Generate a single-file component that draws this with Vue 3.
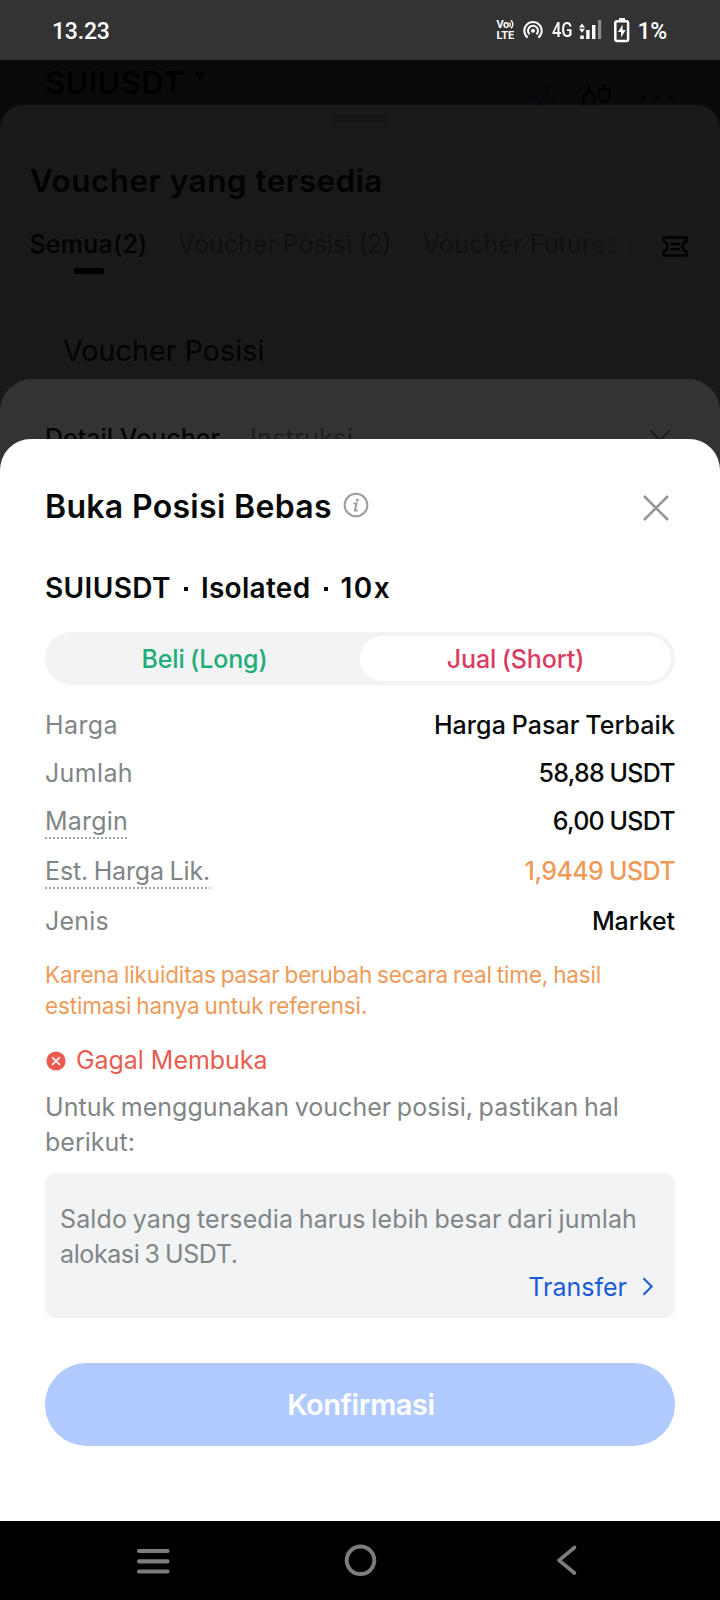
<script setup>
const rows = [
  { label: 'Harga', value: 'Harga Pasar Terbaik', lcls: 'harga', vcls: 'words' },
  { label: 'Jumlah', value: '58,88 USDT', lcls: 'wide', vcls: 'num' },
  { label: 'Margin', value: '6,00 USDT', lcls: 'margin dotted', vcls: 'num' },
  { label: 'Est. Harga Lik.', value: '1,9449 USDT', lcls: 'est dotted', vcls: 'num orange' },
  { label: 'Jenis', value: 'Market', lcls: 'jenis', vcls: 'market' },
]
</script>

<template>
  <div class="screen">
    <header class="status">
      <span class="clock">13.23</span>
      <div class="sys">
        <div class="volte">
          <span class="vo">Vo<svg width="6" height="9" viewBox="0 0 6 9"><path d="M.5 2.500q1.800 1.800 0 4.300M2 .3q3.800 3.700 0 8" fill="none" stroke="#fff" stroke-width="1.300" /></svg></span>
          <span class="lte">LTE</span>
        </div>
        <svg class="hotspot" width="20" height="20" viewBox="0 0 20 20" fill="none" stroke="#fff" stroke-width="2">
          <path d="M4.600 17.600A8.700 8.700 0 1 1 15.400 17.600" />
          <path d="M6.500 14.300A5 5 0 1 1 13.500 14.300" />
          <circle cx="10" cy="10.800" r="2" fill="#fff" stroke="none" />
        </svg>
        <span class="net">4G</span>
        <svg class="signal" width="23" height="20" viewBox="0 0 23 20" fill="#fff">
          <path d="M3 3.500l3 3.900H0zM3 12.700L0 8.800h6z" />
          <rect x="1.200" y="15.500" width="3.600" height="3.500" />
          <rect x="7.200" y="10" width="3.400" height="9" />
          <rect x="13" y="5" width="3.400" height="14" />
          <rect x="19" y="0" width="3.200" height="19" fill="#8c8c8c" />
        </svg>
        <svg class="batt" width="16" height="25" viewBox="0 0 16 25">
          <path d="M5 0h6v3H5z" fill="#fff" />
          <rect x="1.300" y="3.200" width="12.800" height="19.800" rx="1.800" fill="none" stroke="#fff" stroke-width="2.500" />
          <path d="M8.600 6.500L4 14h3.100v5.500L11.600 12H8.600z" fill="#fff" />
        </svg>
        <span class="pct">1%</span>
      </div>
    </header>

    <main class="stack">
      <section class="trade">
        <span class="pair-bg">SUIUSDT</span>
        <svg class="caret" width="11" height="8" viewBox="0 0 11 8"><path d="M.5.5h10v2L5.500 7.500.5 2.500z" fill="#000" /></svg>
        <svg class="tools" width="160" height="22" viewBox="0 0 160 22" fill="none" stroke="#010101" stroke-width="2.400">
          <g stroke="#05090f" stroke-width="2"><path d="M8 14h6l6 7M20 2h9l-5 7 10 11M20 10l6 10" /></g>
          <path d="M68 1v6M62.500 22v-8q0-3 3-4l2.500-3 2.500 3q3 1 3 4v8M83 1v5M78 6.500h10.500v9l-3 3h-4.500l-3-3z" />
          <g fill="#000" stroke="none"><rect x="120" y="13" width="4" height="4" /><rect x="134" y="13" width="4" height="4" /><rect x="148" y="13" width="4" height="4" /></g>
        </svg>
      </section>

      <section class="vouchers">
        <div class="handle"></div>
        <h2>Voucher yang tersedia</h2>
        <div class="tabs">
          <span class="tab on">Semua(2)</span>
          <span class="tab pos">Voucher Posisi (2)</span>
          <span class="tab fut">Voucher Futures (</span>
          <svg class="ticket" width="26" height="21" viewBox="0 0 26 21" fill="none" stroke="#000" stroke-width="2.300">
            <path d="M1.500 1.500h23v4q-4 1.500-4 5t4 5v4h-23v-4q4-1.500 4-5t-4-5z" /><path d="M8.500 7.900h9.500M8.500 13.100h9.500" />
          </svg>
        </div>
        <p class="card-title">Voucher Posisi</p>
      </section>

      <section class="detail">
        <span class="d1">Detail Voucher</span>
        <span class="d2">Instruksi</span>
        <svg class="dx" width="22" height="22" viewBox="0 0 22 22"><path d="M1 1l20 20M21 1L1 21" stroke="#1c1c1c" stroke-width="1.800" /></svg>
      </section>

      <section class="sheet">
        <div class="head">
          <h1>Buka Posisi Bebas</h1>
          <svg class="info" width="26" height="26" viewBox="0 0 26 26">
            <circle cx="13" cy="13" r="11.300" fill="none" stroke="#9b9e9e" stroke-width="2.100" />
            <circle cx="14.300" cy="7.900" r="1.500" fill="#9b9e9e" />
            <path d="M10.400 11.600h3.200l-1.700 6.900h2.600" fill="none" stroke="#9b9e9e" stroke-width="2" />
          </svg>
          <svg class="close" width="26" height="26" viewBox="0 0 26 26"><path d="M1 1l24 24M25 1L1 25" stroke="#959898" stroke-width="2.600" /></svg>
        </div>
        <div class="pair"><span>SUIUSDT</span><i></i><span class="iso">Isolated</span><i></i><span class="lev">10x</span></div>
        <div class="seg">
          <button class="buy">Beli (Long)</button>
          <button class="sell">Jual (Short)</button>
        </div>
        <div class="rows">
          <div v-for="r in rows" :key="r.label" class="row">
            <span class="label" :class="r.lcls">{{ r.label }}</span>
            <span class="value" :class="r.vcls">{{ r.value }}</span>
          </div>
        </div>
        <p class="note">Karena likuiditas pasar berubah secara real time, hasil<br>estimasi hanya untuk referensi.</p>
        <div class="fail">
          <svg width="20" height="20" viewBox="0 0 20 20"><circle cx="10" cy="10" r="9.600" fill="#ea5a4d" /><path d="M6.100 6.100l7.800 7.800M13.900 6.100l-7.800 7.800" stroke="#fff" stroke-width="1.600" /></svg>
          <span>Gagal Membuka</span>
        </div>
        <p class="req">Untuk menggunakan voucher posisi, pastikan hal<br>berikut:</p>
        <div class="box">
          <p>Saldo yang tersedia harus lebih besar dari jumlah<br><span class="l2">alokasi 3 USDT.</span></p>
          <div class="transfer">
            <span>Transfer</span>
            <svg width="12" height="19" viewBox="0 0 12 19"><path d="M1.500 1.200l8.200 8.300-8.200 8.300" fill="none" stroke="#1a5bd6" stroke-width="2" /></svg>
          </div>
        </div>
        <button class="confirm">Konfirmasi</button>
      </section>
    </main>

    <nav class="nav">
      <svg width="720" height="79" viewBox="0 0 720 79" fill="none" stroke="#7d7d7d">
        <path d="M139 30h28.500M139 40.300h28.500M139 50.500h28.500" stroke-width="4.200" stroke-linecap="round" />
        <circle cx="360.500" cy="39.300" r="13.800" stroke-width="4" />
        <path d="M574.500 26.500L559 39.300l15.500 12.700" stroke-width="3.600" stroke-linecap="round" stroke-linejoin="round" />
      </svg>
    </nav>
  </div>
</template>

<style>
body { margin: 0; }
</style>

<style scoped>
* { box-sizing: border-box; }
.screen { width: 720px; height: 1600px; display: flex; flex-direction: column; overflow: hidden; background: #000; font-family: Inter, "Liberation Sans", sans-serif; font-size: 25px; color: #080a0a; white-space: nowrap; }
h1, h2, p { margin: 0; }
button { border: 0; padding: 0; margin: 0; font: inherit; color: inherit; background: none; white-space: nowrap; }
svg { display: block; flex: none; }

.status { height: 60px; flex: none; background: #333; color: #fff; display: flex; justify-content: space-between; font-family: Roboto, sans-serif; font-weight: 500; padding: 0 53px 0 52px; }
.clock { font-size: 23px; line-height: 63px; letter-spacing: -.2px; }
.sys { display: flex; align-items: flex-start; }
.volte { width: 20px; padding-top: 19px; font-weight: 700; font-size: 11px; }
.vo { display: flex; line-height: 11px; height: 11px; letter-spacing: -.4px; }
.vo svg { margin: .5px 0 0 0; }
.lte { display: block; line-height: 11px; }
.hotspot { margin: 20px 0 0 6px; }
.net { font-size: 20px; line-height: 61px; width: 20px; margin-left: 9px; transform: scaleX(.82); transform-origin: left; }
.signal { margin: 20px 0 0 7px; }
.batt { margin: 18px 0 0 12px; }
.pct { font-size: 23px; line-height: 63px; margin-left: 8px; letter-spacing: -.3px; }

.stack { position: relative; height: 1461px; flex: none; background: #0a0a0a; }
.trade { height: 45px; display: flex; padding-left: 45px; color: #000; }
.pair-bg { font-size: 31px; font-weight: 600; line-height: 46px; letter-spacing: .35px; }
.caret { margin: 12px 0 0 11px; }
.tools { margin: 23px 0 0 315px; }

.vouchers { position: absolute; left: 0; right: 0; top: 45px; height: 320px; border-radius: 24px 24px 0 0; background: #191919; color: #010303; }
.handle { width: 58px; height: 8px; border-radius: 4px; margin: 10px auto 0; background: #161616; }
h2 { margin: 37.500px 0 0 30px; font-size: 31.500px; font-weight: 600; line-height: 40px; letter-spacing: .45px; }
.tabs { display: flex; height: 93.500px; padding: 25.500px 0 0 30px; line-height: 36px; color: #0f1010; }
.on { font-weight: 500; color: #010303; letter-spacing: .25px; display: flex; flex-direction: column; align-items: center; width: 117px; }
.on::after { content: ''; width: 30px; height: 5.500px; border-radius: 2px; background: #000; margin-top: 6px; }
.pos { margin-left: 31px; width: 214px; letter-spacing: 0; word-spacing: -1px; }
.fut { margin-left: 31px; width: 216px; overflow: hidden; letter-spacing: .1px; background: linear-gradient(90deg, #0f1010 70%, #191919 100%); -webkit-background-clip: text; background-clip: text; color: transparent; }
.ticket { margin: 10px 0 0 23px; }
.card-title { margin: 39px 0 0 63px; font-size: 28.500px; line-height: 36px; letter-spacing: .13px; }

.detail { position: absolute; left: 0; right: 0; top: 319px; height: 100px; border-radius: 32px 32px 0 0; background: #333; display: flex; padding: 42.500px 0 0 45px; line-height: 32px; }
.d1 { font-weight: 500; color: #040505; width: 205px; }
.d2 { color: #1c1e1e; width: 399px; letter-spacing: .35px; }
.dx { margin-top: 7px; }

.sheet { position: absolute; left: 0; right: 0; top: 379px; bottom: 0; border-radius: 31px 31px 0 0; background: #fff; padding: 48px 45px 0; }
.head { display: flex; height: 40px; }
h1 { font-size: 32px; line-height: 40px; font-weight: 600; letter-spacing: .32px; width: 298px; }
.info { margin-top: 5px; }
.close { margin: 8px 0 0 274px; }
.pair { display: flex; margin-top: 44px; height: 34px; font-size: 28px; line-height: 34px; font-weight: 600; letter-spacing: .38px; }
.pair i { width: 4px; height: 4px; background: #080a0a; margin: 16px 12.500px 0 13.500px; }
.iso { letter-spacing: .3px; }
.lev { letter-spacing: 1.400px; }
.seg { display: flex; margin-top: 27px; height: 53px; border-radius: 27px; background: #f1f3f4; padding: 4px; line-height: 46px; font-weight: 500; }
.seg button { width: 311px; height: 45px; border-radius: 23px; text-align: center; word-spacing: -1px; }
.buy { color: #20ad78; letter-spacing: -.15px; }
.sell { color: #db3a62; background: #fff; letter-spacing: -.12px; }
.rows { margin-top: 25px; height: 226px; }
.row { display: flex; justify-content: space-between; height: 48px; line-height: 30px; }
.row:nth-child(n+3) { height: 50px; }
.label { color: #818586; height: 30px; }
.harga { letter-spacing: .4px; }
.wide { letter-spacing: .35px; }
.margin { letter-spacing: .2px; }
.est { letter-spacing: -.15px; word-spacing: -1.200px; }
.jenis { letter-spacing: .2px; }
.dotted { height: 33px; background: repeating-linear-gradient(90deg, #a2a5a6 0 2px, transparent 2px 4px) bottom / 100% 2px no-repeat; }
.value { font-weight: 500; }
.words { letter-spacing: .07px; word-spacing: -1px; }
.num { letter-spacing: -.7px; word-spacing: -.5px; }
.market { letter-spacing: -.1px; }
.orange { color: #ef9a58; letter-spacing: -.55px; }
.note { margin-top: 24px; font-size: 22.500px; line-height: 30.500px; color: #ef9a58; letter-spacing: -.15px; word-spacing: -1.200px; }
.fail { display: flex; margin-top: 24px; line-height: 30px; color: #e85d51; }
.fail svg { margin: 5.500px 10px 0 1px; }
.fail span { letter-spacing: -.05px; }
.req { margin-top: 15px; line-height: 35px; color: #818586; letter-spacing: .03px; word-spacing: -1.500px; }
.box { margin-top: 13px; height: 145px; border-radius: 10px; background: #f1f3f5; padding: 29px 21px 0 15px; color: #818586; }
.box p { line-height: 35px; letter-spacing: .13px; word-spacing: -1.500px; }
.l2 { letter-spacing: -.4px; word-spacing: -1.300px; }
.transfer { display: flex; justify-content: flex-end; line-height: 30px; color: #1a5bd6; }
.transfer svg { margin: 5px 0 0 15px; }
.confirm { display: block; width: 630px; height: 83px; margin-top: 45px; padding-left: 2px; border-radius: 42px; background: #b1caff; color: #fff; font-size: 29px; font-weight: 600; letter-spacing: -.42px; text-align: center; }

.nav { height: 79px; flex: none; background: #000; }
</style>
